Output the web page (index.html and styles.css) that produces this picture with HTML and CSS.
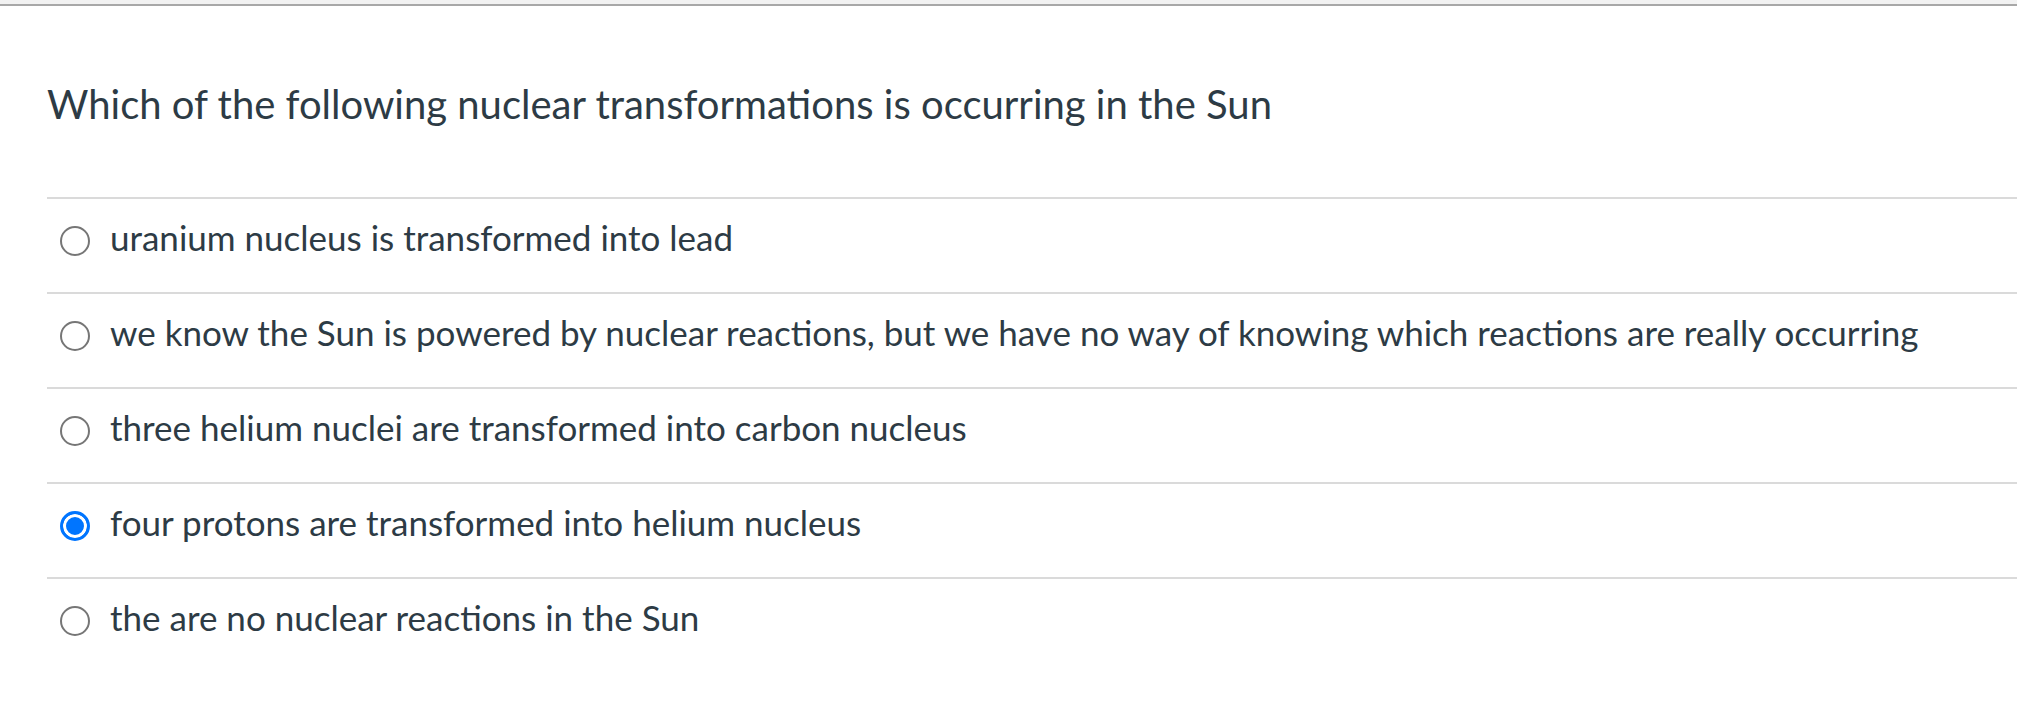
FILE: index.html
```html
<!DOCTYPE html>
<html lang="en">

<head>
    <meta charset="UTF-8">
    <meta name="viewport" content="width=device-width, initial-scale=1.0">
    <title>Quiz question</title>
    <link rel="stylesheet" href="styles.css">
</head>

<body>
    <div class="top_bar"></div>

    <div class="question">
        <p class="question_text">Which of the following nuclear transformations is occurring in the Sun</p>

        <div class="answers">
            <label class="answer">
                <input type="radio" name="answer" class="answer_radio">
                <span class="answer_text">uranium nucleus is transformed into lead</span>
            </label>
            <label class="answer">
                <input type="radio" name="answer" class="answer_radio">
                <span class="answer_text">we know the Sun is powered by nuclear reactions, but we have no way of knowing which reactions are really occurring</span>
            </label>
            <label class="answer">
                <input type="radio" name="answer" class="answer_radio">
                <span class="answer_text">three helium nuclei are transformed into carbon nucleus</span>
            </label>
            <label class="answer">
                <input type="radio" name="answer" class="answer_radio" checked>
                <span class="answer_text">four protons are transformed into helium nucleus</span>
            </label>
            <label class="answer">
                <input type="radio" name="answer" class="answer_radio">
                <span class="answer_text">the are no nuclear reactions in the Sun</span>
            </label>
        </div>
    </div>
</body>

</html>
```

FILE: styles.css
```css
* {
    margin: 0;
    padding: 0;
    box-sizing: border-box;
}

body {
    background: #fff;
    color: #2d3b45;
    font-family: Lato, "Liberation Sans", sans-serif;
}

.top_bar {
    height: 6px;
    background: #f2f2f2;
    border-bottom: 2px solid #a8a8a8;
}

.question {
    padding-left: 47px;
}

.question_text {
    margin-top: 74px;
    margin-bottom: 69px;
    font-size: 40px;
    line-height: 1.2;
}

.answer {
    display: flex;
    align-items: center;
    height: 95px;
    padding-bottom: 9px;
    border-top: 2px solid #dadada;
    cursor: pointer;
}

.answer_radio {
    appearance: none;
    flex: none;
    width: 30px;
    height: 30px;
    margin-left: 13px;
    margin-right: 20px;
    border: 2.4px solid #767676;
    border-radius: 50%;
    background: #fff;
}

.answer_radio:checked {
    border: 3px solid #0075ff;
    background: #0075ff;
    box-shadow: inset 0 0 0 3px #fff;
}

.answer_text {
    padding-bottom: 8px;
    font-size: 35px;
    line-height: 1.2;
}
```
